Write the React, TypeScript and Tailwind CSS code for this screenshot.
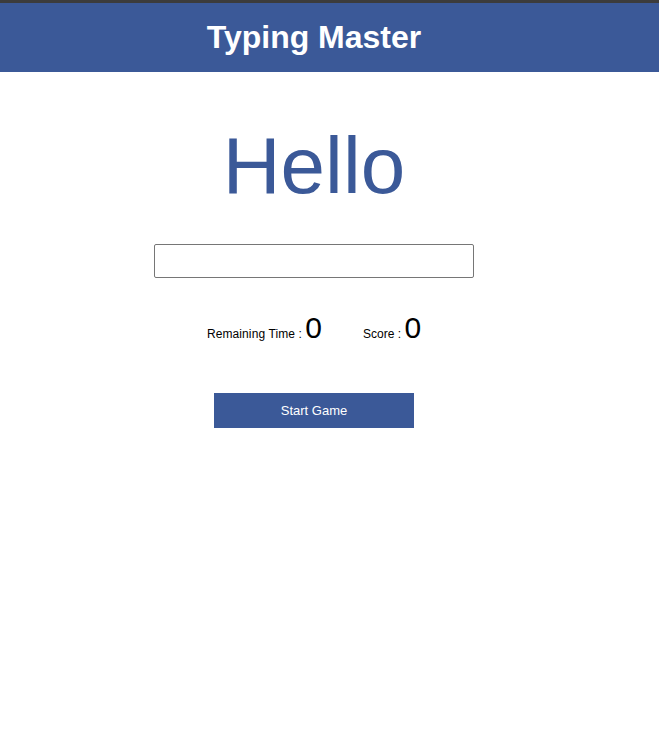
export default function App() {
  return (
    <div className="min-h-[745px] bg-white" style={{ fontFamily: '"Liberation Sans", Arial, sans-serif' }}>
      <div className="h-[3px] bg-[#3c3c3c]" />
      <div className="flex h-[69px] items-center bg-[#3b5998] pb-[2px]">
        <h1 className="w-[628px] text-center text-[32px] font-bold text-white">Typing Master</h1>
      </div>
      <div className="flex w-[628px] flex-col items-center">
        <div className="mt-[48px] text-[80px] leading-[92px] text-[#3b5998]">Hello</div>
        <input
          type="text"
          className="mt-[32px] h-[34px] w-[320px] rounded-[2px] border border-[#767676] px-2 text-base outline-none"
        />
        <div className="mt-[27px] flex h-[37px] items-baseline text-black">
          <span className="text-[12px] tracking-[0.1px]">Remaining Time :&nbsp;</span>
          <span className="text-[30px]">0</span>
          <span className="ml-[41px] text-[12px]">Score :&nbsp;</span>
          <span className="text-[30px]">0</span>
        </div>
        <button className="mt-[51px] h-[35px] w-[200px] bg-[#3b5998] text-[13px] text-white">Start Game</button>
      </div>
    </div>
  );
}
